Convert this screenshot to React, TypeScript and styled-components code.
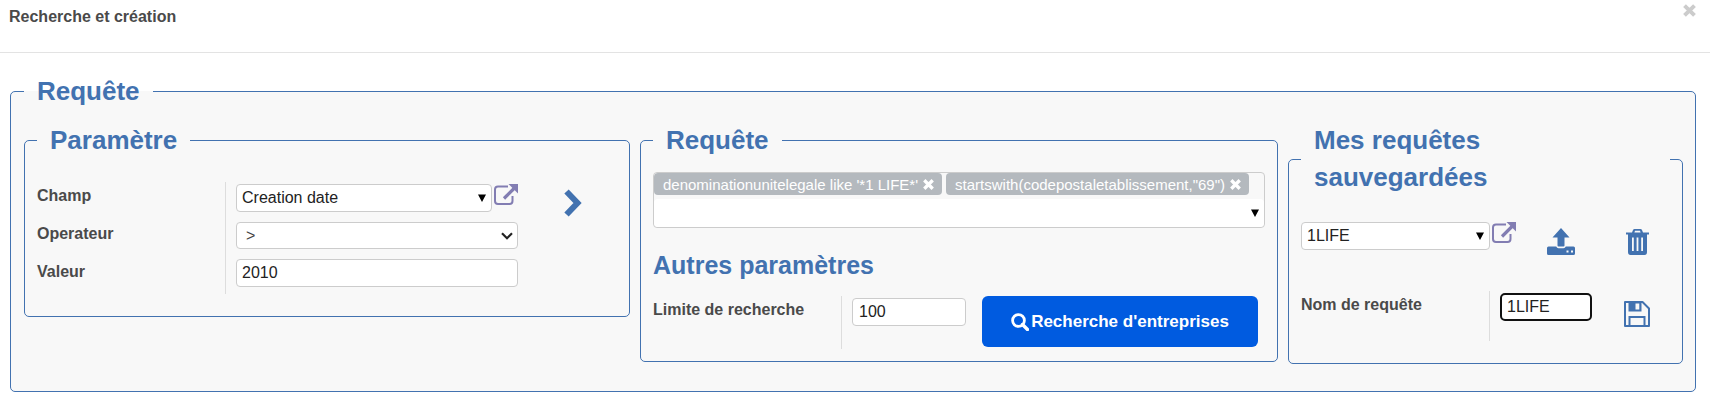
import React from "react";
import styled, { createGlobalStyle } from "styled-components";

const blue = "#4272b0";

const Global = createGlobalStyle`
  * { box-sizing: border-box; }
  body {
    margin: 0;
    background: #fff;
    color: #4a4a4a;
    font-family: "Liberation Sans", Arial, sans-serif;
    font-size: 16px;
  }
  button, input, select { font: inherit; }
`;

const Header = styled.header`
  display: flex;
  justify-content: space-between;
  align-items: flex-start;
  height: 53px;
  padding: 4px 14px 0 9px;
  border-bottom: 1px solid #e3e3e3;
`;

const Title = styled.h1`
  margin: 0;
  padding-top: 2px;
  font-size: 16px;
  line-height: 22px;
`;

const IconButton = styled.button`
  display: block;
  flex: none;
  padding: 0;
  border: 0;
  background: none;
  color: ${blue};
  cursor: pointer;
  svg { display: block; }
`;

const CloseButton = styled(IconButton)`
  color: #ccc;
`;

const LinkButton = styled(IconButton)`
  color: #827db2;
`;

const Outer = styled.fieldset`
  min-width: 0;
  margin: 20px 14px 0 10px;
  padding: 12px 12px 27px 13px;
  border: 1px solid ${blue};
  border-radius: 5px;
  background: #f8f8f8;
`;

const Legend = styled.legend`
  padding: 0 13px;
  color: ${blue};
  font-size: 26px;
  font-weight: bold;
  line-height: 37px;
`;

const Columns = styled.div`
  display: grid;
  grid-template-columns: 606fr 638fr 395fr;
  gap: 10px;
  align-items: start;
`;

const Panel = styled.fieldset`
  min-width: 0;
  margin: 0;
  padding: 13px 12px 12px;
  border: 1px solid ${blue};
  border-radius: 5px;
`;

const ParamGrid = styled.div`
  display: grid;
  grid-template-columns: 188fr 293fr 99fr;
  margin: 10px 0;
`;

const Labels = styled.div`
  display: flex;
  flex-direction: column;
  gap: 16px;
  padding-top: 3px;
`;

const Label = styled.label`
  font-weight: bold;
  line-height: 22px;
`;

const RowLabel = styled(Label)`
  padding-top: 3px;
`;

const Fields = styled.div`
  display: flex;
  flex-direction: column;
  gap: 10px;
  min-width: 0;
  padding: 2px 0 7px 10px;
  border-left: 1px solid #ddd;
`;

const Inline = styled.div`
  display: flex;
  gap: 2px;
  align-items: flex-start;
  min-width: 0;
`;

const Input = styled.input`
  width: 100%;
  min-width: 0;
  height: 28px;
  padding: 0 5px;
  border: 1px solid #ccc;
  border-radius: 4px;
  background: #fff;
  color: #222;
  outline: none;
`;

const LimitInput = styled(Input)`
  padding: 0 6px;
`;

const NameInput = styled(Input)`
  border: 2px solid #111;
  border-radius: 5px;
`;

const Combo = styled.div`
  display: flex;
  flex: 1;
  min-width: 0;
  height: 28px;
  align-items: center;
  padding-right: 5px;
  border: 1px solid #ccc;
  border-radius: 4px;
  background: #fff;
`;

const ComboInput = styled.input`
  flex: 1;
  min-width: 0;
  height: 26px;
  padding: 0 5px;
  border: 0;
  background: none;
  color: #222;
  outline: none;
`;

const SelectBox = styled.div`
  position: relative;
  display: flex;
  svg {
    position: absolute;
    top: 10px;
    right: 5px;
    pointer-events: none;
  }
`;

const Select = styled.select`
  appearance: none;
  width: 100%;
  height: 27px;
  padding: 0 9px;
  border: 1px solid #ccc;
  border-radius: 4px;
  background: #fff;
  color: #444;
`;

const ArrowCell = styled.div`
  padding: 7px 0 0 46px;
`;

const TagBox = styled.div`
  border: 1px solid #ccc;
  border-radius: 4px;
  overflow: hidden;
`;

const Tags = styled.div`
  display: flex;
  flex-wrap: wrap;
  gap: 4px;
  padding-bottom: 4px;
`;

const Tag = styled.span`
  display: flex;
  align-items: center;
  gap: 5px;
  height: 22px;
  padding: 0 8px 0 9px;
  border-radius: 4px;
  background: #b4b9be;
  color: #fff;
  font-size: 15px;
  white-space: nowrap;
`;

const TagClose = styled(IconButton)`
  color: #fff;
`;

const TagEntry = styled(Combo)`
  border: 0;
`;

const Heading = styled.h2`
  margin: 19px 0 12px;
  color: ${blue};
  font-size: 25px;
  line-height: 37px;
`;

const LimitGrid = styled.div`
  display: grid;
  grid-template-columns: 188fr 125fr 299fr;
  height: 53px;
`;

const SearchButton = styled.button`
  display: flex;
  align-items: center;
  justify-content: center;
  gap: 2px;
  height: 51px;
  margin: 0 7px 0 16px;
  padding: 0;
  border: 0;
  border-radius: 6px;
  background: #005be0;
  color: #fff;
  font-size: 17px;
  font-weight: bold;
  white-space: nowrap;
  cursor: pointer;
`;

const SavedRow = styled.div`
  display: grid;
  grid-template-columns: 215fr 92fr 62fr;
  margin-top: 13px;
`;

const NameRow = styled.div`
  display: grid;
  grid-template-columns: 188fr 103fr 78fr;
  min-height: 50px;
  margin: 36px 0 10px;
`;

const IconCell = styled.div<{ $top: number; $end: number }>`
  display: flex;
  justify-content: flex-end;
  align-items: flex-start;
  padding: ${(p) => p.$top}px ${(p) => p.$end}px 0 0;
`;

const Cross = ({ size }: { size: number }) => (
  <svg width={size} height={size} viewBox="0 0 12 12" fill="none" stroke="currentColor" strokeWidth="3.6">
    <path d="M1.4 1.4 10.6 10.6M10.6 1.4 1.4 10.6" />
  </svg>
);

const Triangle = () => (
  <svg width="8" height="8" viewBox="0 0 8 8" fill="#000" aria-hidden="true">
    <path d="M0 .5h8L4 8z" />
  </svg>
);

const Caret = () => (
  <svg width="12" height="8" viewBox="0 0 12 8" fill="none" stroke="#222" strokeWidth="2.2" aria-hidden="true">
    <path d="M1 1.200 6 6.200 11 1.200" />
  </svg>
);

const External = () => (
  <svg width="24" height="22" viewBox="0 0 24 22" fill="none" stroke="currentColor" strokeWidth="2">
    <path d="M14 2.500H4Q1 2.500 1 5.500V17q0 3 3 3h11.500q3 0 3-3v-5" />
    <path d="M10 14.500 20 4.500" strokeWidth="3.200" />
    <path d="M14.500 0H24v9.500z" fill="currentColor" stroke="none" />
  </svg>
);

const Chevron = () => (
  <svg width="18" height="28" viewBox="0 0 18 28" fill="none" stroke="currentColor" strokeWidth="6">
    <path d="M2.500 2.500 13.500 14 2.500 25.500" />
  </svg>
);

const Search = () => (
  <svg width="18" height="18" viewBox="0 0 18 18" fill="none" stroke="currentColor" strokeWidth="2.800" aria-hidden="true">
    <circle cx="7.500" cy="7.500" r="5.900" />
    <path d="m11.500 11.500 5 5" strokeWidth="3.400" strokeLinecap="round" />
  </svg>
);

const Upload = () => (
  <svg width="28" height="27" viewBox="0 0 28 27" fill="currentColor">
    <path d="M14 0 22.500 9.500H17.500V17.500q0 1-1 1h-5q-1 0-1-1V9.500H5.500z" />
    <path fillRule="evenodd" d="M1.500 18.500H9.200Q10 20.300 11.500 20.300h5q1.500 0 2.300-1.800h7.700q1.500 0 1.500 1.500v5.500q0 1.500-1.500 1.500h-25Q0 27 0 25.500V20q0-1.500 1.500-1.500zM19.500 22.500v2h2v-2zM24 22.500v2h2v-2z" />
  </svg>
);

const Trash = () => (
  <svg width="23" height="26" viewBox="0 0 23 26" fill="currentColor">
    <path fillRule="evenodd" d="M8.500 0h6q1 0 1.500 1l1 2.500h6v2h-2V23q0 3-2.500 3h-14Q2 26 2 23V5.500H0v-2h6L7 1q.5-1 1.500-1zM9 1.800 8.400 3.500h6.200L14 1.800zM6 8.500V22h1.800V8.500zM10.600 8.500V22h1.800V8.500zM15.200 8.500V22H17V8.500z" />
  </svg>
);

const Save = () => (
  <svg width="26" height="26" viewBox="0 0 26 26" fill="none" stroke="currentColor" strokeWidth="2">
    <path d="M1 1h17.500L25 7.500V25H1z" strokeLinejoin="round" />
    <path d="M5.500 25v-9h15v9" />
    <path fillRule="evenodd" d="M4.500 1h13v9.500h-13zM11.500 2.500v6h3.800v-6z" fill="currentColor" stroke="none" />
  </svg>
);

export default function App() {
  return (
    <>
      <Global />
      <Header>
        <Title>Recherche et création</Title>
        <CloseButton aria-label="Fermer"><Cross size={13} /></CloseButton>
      </Header>
      <Outer>
        <Legend>Requête</Legend>
        <Columns>
          <Panel>
            <Legend>Paramètre</Legend>
            <ParamGrid>
              <Labels>
                <Label htmlFor="champ">Champ</Label>
                <Label htmlFor="operateur">Operateur</Label>
                <Label htmlFor="valeur">Valeur</Label>
              </Labels>
              <Fields>
                <Inline>
                  <Combo>
                    <ComboInput id="champ" defaultValue="Creation date" />
                    <Triangle />
                  </Combo>
                  <LinkButton aria-label="Ouvrir le champ"><External /></LinkButton>
                </Inline>
                <SelectBox>
                  <Select id="operateur" defaultValue=">">
                    <option>&gt;</option>
                  </Select>
                  <Caret />
                </SelectBox>
                <Input id="valeur" defaultValue="2010" />
              </Fields>
              <ArrowCell>
                <IconButton aria-label="Ajouter à la requête"><Chevron /></IconButton>
              </ArrowCell>
            </ParamGrid>
          </Panel>

          <Panel>
            <Legend>Requête</Legend>
            <TagBox>
              <Tags>
                <Tag>
                  denominationunitelegale like '*1 LIFE*'
                  <TagClose aria-label="Retirer"><Cross size={11} /></TagClose>
                </Tag>
                <Tag>
                  startswith(codepostaletablissement,"69")
                  <TagClose aria-label="Retirer"><Cross size={11} /></TagClose>
                </Tag>
              </Tags>
              <TagEntry>
                <ComboInput aria-label="Critères" />
                <Triangle />
              </TagEntry>
            </TagBox>
            <Heading>Autres paramètres</Heading>
            <LimitGrid>
              <RowLabel htmlFor="limite">Limite de recherche</RowLabel>
              <Fields>
                <LimitInput id="limite" defaultValue="100" />
              </Fields>
              <SearchButton><Search />Recherche d'entreprises</SearchButton>
            </LimitGrid>
          </Panel>

          <Panel>
            <Legend>Mes requêtes sauvegardées</Legend>
            <SavedRow>
              <Inline>
                <Combo>
                  <ComboInput aria-label="Requête sauvegardée" defaultValue="1LIFE" />
                  <Triangle />
                </Combo>
                <LinkButton aria-label="Ouvrir la requête"><External /></LinkButton>
              </Inline>
              <IconCell $top={6} $end={33}>
                <IconButton aria-label="Charger"><Upload /></IconButton>
              </IconCell>
              <IconCell $top={7} $end={21}>
                <IconButton aria-label="Supprimer"><Trash /></IconButton>
              </IconCell>
            </SavedRow>
            <NameRow>
              <RowLabel htmlFor="nom">Nom de requête</RowLabel>
              <Fields>
                <NameInput id="nom" defaultValue="1LIFE" autoFocus />
              </Fields>
              <IconCell $top={10} $end={20}>
                <IconButton aria-label="Enregistrer"><Save /></IconButton>
              </IconCell>
            </NameRow>
          </Panel>
        </Columns>
      </Outer>
    </>
  );
}
